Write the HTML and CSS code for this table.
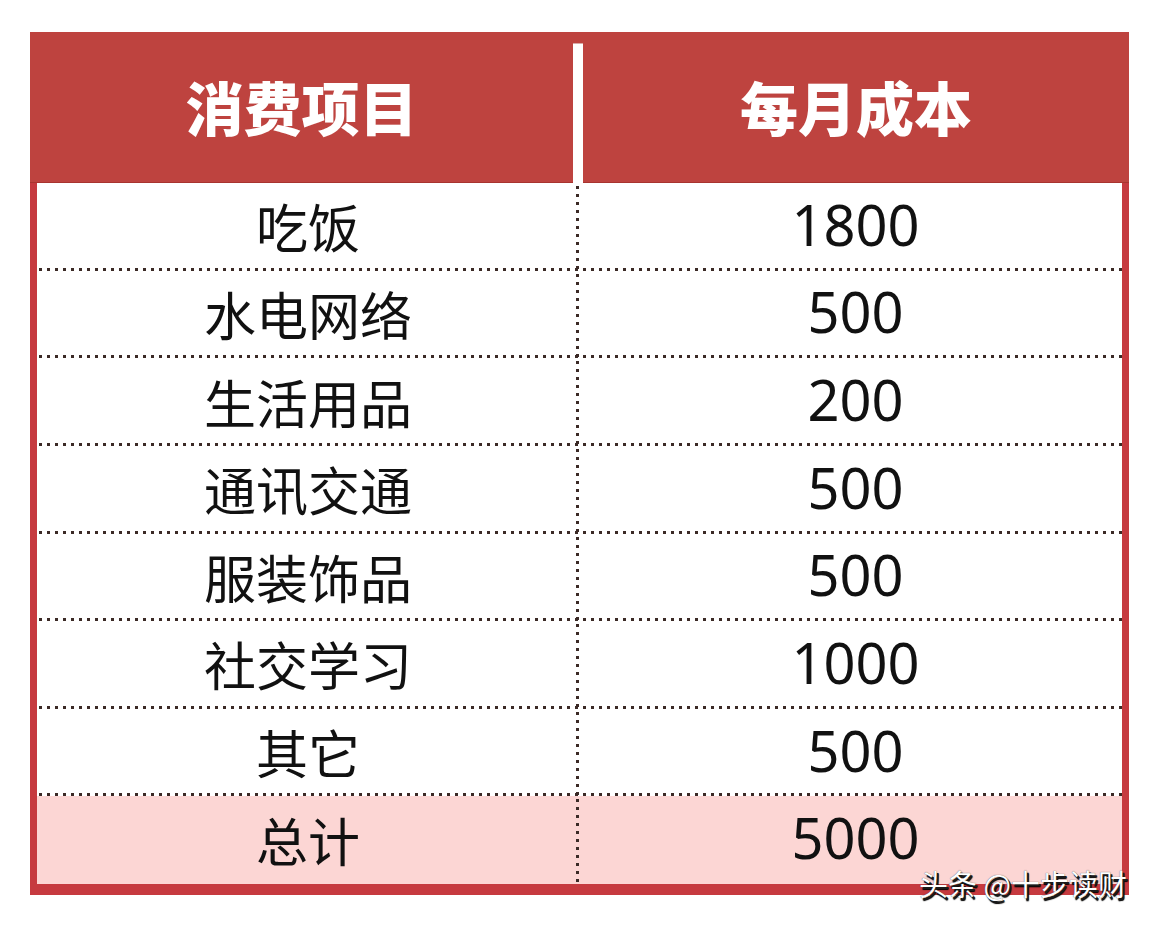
FILE: index.html
```html
<!DOCTYPE html>
<html lang="zh-CN">
<head>
<meta charset="utf-8">
<title>每月成本</title>
<link rel="stylesheet" href="styles.css">
</head>
<body>
<div class="page">
  <div class="table">
    <div class="head">
      <div class="hcell">消费项目</div>
      <div class="hdiv"></div>
      <div class="hcell">每月成本</div>
    </div>
    <div class="body">
      <div class="row"><div class="cell name">吃饭</div><div class="cell num">1800</div></div>
      <div class="row"><div class="cell name">水电网络</div><div class="cell num">500</div></div>
      <div class="row"><div class="cell name">生活用品</div><div class="cell num">200</div></div>
      <div class="row"><div class="cell name">通讯交通</div><div class="cell num">500</div></div>
      <div class="row"><div class="cell name">服装饰品</div><div class="cell num">500</div></div>
      <div class="row"><div class="cell name">社交学习</div><div class="cell num">1000</div></div>
      <div class="row"><div class="cell name">其它</div><div class="cell num">500</div></div>
      <div class="row total"><div class="cell name">总计</div><div class="cell num">5000</div></div>
    </div>
  </div>
  <div class="watermark">头条 @十步读财</div>
</div>
</body>
</html>
```

FILE: styles.css
```css
html, body {
  margin: 0;
  padding: 0;
  background: #ffffff;
}

.page {
  position: relative;
  width: 1160px;
  height: 926px;
  padding: 32px 0 0 30px;
  box-sizing: border-box;
}

.table {
  width: 1099px;
  display: flex;
  flex-direction: column;
}

.head {
  height: 151px;
  background: #be433f;
  display: grid;
  grid-template-columns: 543px 10px 1fr;
  box-shadow: inset 0 -1px 0 #a8342f;
}

.hcell {
  display: flex;
  align-items: center;
  justify-content: center;
  color: #ffffff;
  font-family: "Noto Sans CJK SC", "Noto Sans", sans-serif;
  font-weight: 900;
  font-size: 58px;
  padding-bottom: 4px;
  box-sizing: border-box;
}

.hdiv {
  background: #ffffff;
  margin-top: 11px;
  border-top: 1px solid #d9a9a6;
}

.body {
  height: 712px;
  border-left: 7px solid #c63a3f;
  border-right: 7px solid #c63a3f;
  border-bottom: 11px solid #c63a3f;
  box-sizing: border-box;
  display: grid;
  grid-template-rows: repeat(8, 1fr);
  background: #ffffff;
}

.row {
  display: grid;
  grid-template-columns: 542px 1fr;
  background-image: linear-gradient(to right, #3b2a26 3px, transparent 3px);
  background-size: 8px 3px;
  background-repeat: repeat-x;
  background-position: 2px 100%;
}

.row.total {
  background-color: #fcd6d4;
  background-image: none;
}

.cell {
  display: flex;
  align-items: center;
  justify-content: center;
  color: #111111;
}

.name {
  font-family: "Noto Sans CJK SC", "Noto Sans", sans-serif;
  font-size: 52px;
  padding-bottom: 2px;
  background-image: linear-gradient(to bottom, #3b2a26 3px, transparent 3px);
  background-size: 3px 8px;
  background-repeat: repeat-y;
  background-position: 100% 3px;
}

.num {
  font-family: "Noto Sans", "Open Sans", sans-serif;
  font-size: 56px;
  padding-left: 10px;
  padding-bottom: 6px;
}

.watermark {
  position: absolute;
  left: 919px;
  top: 862px;
  font-family: "Noto Sans CJK SC", "Noto Sans", sans-serif;
  font-size: 29px;
  color: #ffffff;
  text-shadow: 2px 2px 0 #1a1a1a, 2px 3px 1px #000000, 0 0 1px #333333;
  white-space: nowrap;
}
```
